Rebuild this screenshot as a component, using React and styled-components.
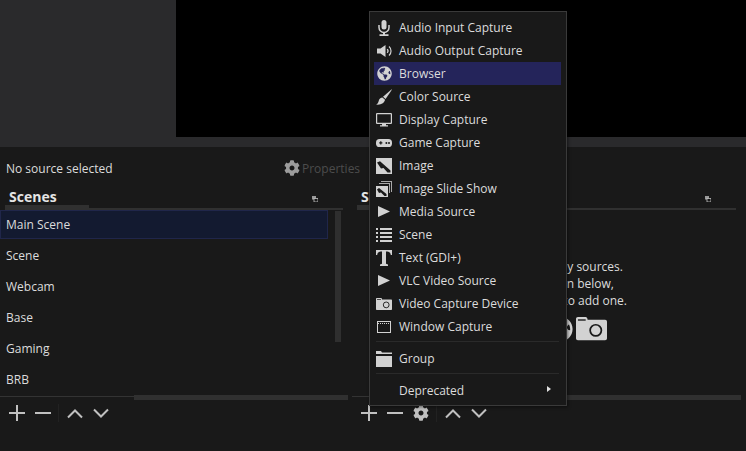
import React from "react";
import styled, { createGlobalStyle } from "styled-components";
import { FaCog } from "react-icons/fa";
import { FaGlobeAmericas } from "react-icons/fa";

const GlobalStyle = createGlobalStyle`
  html, body {
    margin: 0;
    padding: 0;
    background: #191919;
  }
  * {
    box-sizing: border-box;
  }
`;

const Page = styled.div`
  position: relative;
  width: 746px;
  height: 451px;
  overflow: hidden;
  background: #191919;
  color: #dcdcdc;
  font-family: "Open Sans", "Liberation Sans", sans-serif;
  font-size: 12px;
`;

const PreviewArea = styled.div`
  height: 147px;
  padding: 0 0 10px 176px;
  background: #2a2a2c;
`;

const Canvas = styled.div`
  height: 100%;
  background: #000;
`;

const PropertiesBar = styled.div`
  display: flex;
  align-items: center;
  height: 42px;
  padding-left: 6px;
`;

const NoSource = styled.span`
  width: 278px;
`;

const PropertiesButton = styled.div`
  display: flex;
  align-items: center;
  gap: 2px;
  color: #4c4c4c;
  svg {
    color: #9c9c9c;
  }
`;

const Docks = styled.div`
  display: flex;
  gap: 9px;
`;

const Dock = styled.section`
  width: ${(p) => p.$width}px;
  flex: none;
`;

const DockHeader = styled.div`
  display: flex;
  align-items: flex-start;
  justify-content: space-between;
  height: 21px;
  margin-left: 5px;
  padding-right: 25px;
  border-bottom: 2px solid #303030;
`;

const DockTab = styled.div`
  width: 84px;
  height: 19px;
  padding: 1px 0 0 4px;
  border-bottom: 3px solid #303030;
  font-size: 14px;
  font-weight: 700;
  line-height: 14px;
  color: #e4e4e4;
`;

const FloatIcon = styled.svg`
  width: 6px;
  height: 6px;
  margin-top: 7px;
`;

const DockBody = styled.div`
  display: flex;
  height: 185px;
`;

const SceneList = styled.ul`
  width: 328px;
  margin: 0;
  padding: 0;
  list-style: none;
`;

const SceneRow = styled.li`
  display: flex;
  align-items: center;
  height: 29px;
  margin-bottom: 2px;
  padding-left: 5px;
  background: ${(p) => (p.$selected ? "#131a30" : "transparent")};
  border: 1px solid ${(p) => (p.$selected ? "#20264a" : "transparent")};
`;

const VScroll = styled.div`
  width: 6px;
  height: 131px;
  margin: 1px 0 0 7px;
  background: #2f2f2f;
`;

const EmptyHint = styled.div`
  flex: 1;
  padding: 48px 0 0 2px;
  text-align: center;
  line-height: 17px;
`;

const HintIcons = styled.div`
  display: flex;
  justify-content: center;
  align-items: center;
  gap: 3px;
  margin-top: 7px;
  padding-left: 64px;
  color: #d2d2d2;
`;

const HScroll = styled.div`
  display: flex;
  align-items: flex-start;
  height: 5px;
`;

const ScrollTrack = styled.div`
  flex: none;
  width: ${(p) => p.$width}px;
  height: 1px;
  margin-top: 1px;
  background: #333;
`;

const ScrollThumb = styled.div`
  flex: none;
  width: ${(p) => p.$width}px;
  height: 5px;
  background: #303030;
`;

const Toolbar = styled.div`
  display: flex;
  align-items: center;
  height: 26px;
  padding-left: 9px;
  gap: 10px;
`;

const ToolButton = styled.svg`
  width: 16px;
  height: 16px;
  flex: none;
  color: #c0c0c0;
`;

const ToolSeparator = styled.div`
  width: 1px;
  height: 18px;
  margin: 0 -2px 0 -3px;
  background: #222;
`;

const Menu = styled.div`
  position: absolute;
  left: 369px;
  top: 11px;
  width: 198px;
  height: 395px;
  padding: 4px 5px 3px 4px;
  background: #191919;
  border: 1px solid #3a3a3a;
  box-shadow: 1px 1px 3px rgba(0, 0, 0, 0.5);
`;

const MenuItem = styled.div`
  position: relative;
  display: flex;
  align-items: center;
  height: 23px;
  padding-left: 25px;
  background: ${(p) => (p.$active ? "#24245a" : "transparent")};
  white-space: nowrap;
`;

const MenuIcon = styled.span`
  position: absolute;
  left: 2px;
  top: 0;
  display: flex;
  align-items: center;
  justify-content: center;
  width: 16px;
  height: 23px;
  color: #d2d2d2;
`;

const MenuSeparator = styled.div`
  height: 1px;
  margin: 3px 2px 5px 2px;
  background: #2a2a2a;
`;

const SubArrow = styled.span`
  position: absolute;
  right: 10px;
  top: 7px;
  width: 0;
  height: 0;
  border-left: 4px solid #e0e0e0;
  border-top: 3.5px solid transparent;
  border-bottom: 3.5px solid transparent;
`;

const Float = () => (
  <FloatIcon viewBox="0 0 6 6">
    <rect x="0" y="0" width="4" height="3.5" fill="#9a9a9a" />
    <rect x="2" y="2.5" width="4" height="3.5" fill="#191919" stroke="#c0c0c0" strokeWidth="0.8" />
  </FloatIcon>
);

const Plus = () => (
  <ToolButton viewBox="0 0 16 16">
    <path d="M8 0v16M0 8h16" stroke="currentColor" strokeWidth="2" />
  </ToolButton>
);
const Minus = () => (
  <ToolButton viewBox="0 0 16 16">
    <path d="M0 8h16" stroke="currentColor" strokeWidth="2" />
  </ToolButton>
);
const Up = () => (
  <ToolButton viewBox="0 0 16 16">
    <path d="M1 12.5l7-7 7 7" fill="none" stroke="currentColor" strokeWidth="2" />
  </ToolButton>
);
const Down = () => (
  <ToolButton viewBox="0 0 16 16">
    <path d="M1 4.5l7 7 7-7" fill="none" stroke="currentColor" strokeWidth="2" />
  </ToolButton>
);

const Mic = () => (
  <svg width="12" height="16" viewBox="0 0 12 16" fill="currentColor">
    <rect x="3.5" y="0" width="5" height="9.5" rx="2.5" />
    <path d="M1 5v2.5a5 5 0 0 0 10 0V5" fill="none" stroke="currentColor" strokeWidth="1.5" />
    <path d="M5 12h2v2.2h3.5V16h-9v-1.8H5z" />
  </svg>
);
const Speaker = () => (
  <svg width="15" height="14" viewBox="0 0 15 14" fill="currentColor">
    <path d="M0 4.5h3.5L8.5 1v12l-5-3.5H0z" />
    <path d="M10.2 5.2a2.6 2.6 0 0 1 0 3.6" fill="none" stroke="currentColor" strokeWidth="1.2" />
    <path d="M12 2.5a6 6 0 0 1 0 9" fill="none" stroke="currentColor" strokeWidth="1.2" />
  </svg>
);
const Brush = () => (
  <svg width="16" height="16" viewBox="0 0 16 16" fill="currentColor">
    <path d="M16 0l-.8 1.8L9.6 10 7 7.8z" />
    <path d="M6.4 8.6L9 10.8C8.6 13.6 5 16.4 0 15.6c2.4-1 2.4-3 3-4.6.5-1.4 2-2.4 3.4-2.4z" />
  </svg>
);
const Monitor = () => (
  <svg width="16" height="14" viewBox="0 0 16 14">
    <rect x="0.6" y="0.6" width="14.8" height="9.8" rx="0.5" fill="none" stroke="currentColor" strokeWidth="1.2" />
    <path d="M6 11h4v1.2h2v1.2H4v-1.2h2z" fill="currentColor" />
  </svg>
);
const Gamepad = () => (
  <svg width="16" height="8" viewBox="0 0 16 8">
    <rect x="0" y="0" width="16" height="8" rx="3.6" fill="currentColor" />
    <path d="M3.2 3.2h1V2.2h1.2v1h1v1.4h-1v1H4.2v-1h-1z" fill="#191919" />
    <circle cx="10.4" cy="4" r="1" fill="#191919" />
    <circle cx="13" cy="4" r="1" fill="#191919" />
  </svg>
);
const ImageIcon = () => (
  <svg width="16" height="16" viewBox="0 0 16 16">
    <path d="M0 0h16v16H0z" fill="currentColor" />
    <path d="M1 4.5l3-1.2 10.5 9.2v2h-3L7.5 10 5 10.5z" fill="#191919" />
  </svg>
);
const Slides = () => (
  <svg width="16" height="16" viewBox="0 0 16 16">
    <path d="M5 0h11v11h-1V1H5zM3 2h11v2h-1V3H3zM14 2v10h-1V2z" fill="#a8a8a8" />
    <path d="M0 5h12v11H0z" fill="currentColor" />
    <path d="M1 8.5l2-1.5 7.5 6v2H8.5L5 11.5l-2 .5z" fill="#191919" />
  </svg>
);
const Play = () => (
  <svg width="12" height="11" viewBox="0 0 12 11" fill="currentColor">
    <path d="M0 0l12 5.5L0 11z" />
  </svg>
);
const ListIcon = () => (
  <svg width="16" height="14" viewBox="0 0 16 14" fill="currentColor">
    <path d="M0 0h2v2H0zM4 0h12v2H4zM0 4h2v2H0zM4 4h12v2H4zM0 8h2v2H0zM4 8h12v2H4zM0 12h2v2H0zM4 12h12v2H4z" />
  </svg>
);
const SerifT = () => (
  <svg width="16" height="16" viewBox="0 0 16 16" fill="currentColor">
    <path d="M0 0h16v5h-1.2C14.4 2.6 13.6 1.6 10 1.5v12.2l2 .9V16H4v-1.4l2-.9V1.5C2.4 1.6 1.6 2.6 1.2 5H0z" />
  </svg>
);
const Camera = ({ size = 16 }) => (
  <svg width={size} height={size * 0.75} viewBox="0 0 16 12">
    <path d="M0 1C0 .4.4 0 1 0h4c.5 0 .9.5 1 1.4h9c.6 0 1 .4 1 1V11c0 .6-.4 1-1 1H1c-.6 0-1-.4-1-1z" fill="currentColor" />
    <rect x="1" y="1.2" width="4" height="0.7" fill="#191919" />
    <circle cx="10.2" cy="6.9" r="2.9" fill="none" stroke="#191919" strokeWidth="0.9" />
  </svg>
);
const WindowIcon = () => (
  <svg width="14" height="12" viewBox="0 0 14 12">
    <rect x="0.5" y="0.5" width="13" height="11" fill="none" stroke="currentColor" />
    <path d="M1 2.5h12" stroke="currentColor" strokeDasharray="1 1" />
  </svg>
);
const Folder = () => (
  <svg width="16" height="16" viewBox="0 0 16 16" fill="currentColor">
    <path d="M0 0h5l1 1.5h10V3H0zM0 5h16v11H0z" />
  </svg>
);

const menuItems = [
  { label: "Audio Input Capture", icon: <Mic /> },
  { label: "Audio Output Capture", icon: <Speaker /> },
  { label: "Browser", icon: <FaGlobeAmericas size={15} />, active: true },
  { label: "Color Source", icon: <Brush /> },
  { label: "Display Capture", icon: <Monitor /> },
  { label: "Game Capture", icon: <Gamepad /> },
  { label: "Image", icon: <ImageIcon /> },
  { label: "Image Slide Show", icon: <Slides /> },
  { label: "Media Source", icon: <Play /> },
  { label: "Scene", icon: <ListIcon /> },
  { label: "Text (GDI+)", icon: <SerifT /> },
  { label: "VLC Video Source", icon: <Play /> },
  { label: "Video Capture Device", icon: <Camera /> },
  { label: "Window Capture", icon: <WindowIcon /> },
];

const scenes = ["Main Scene", "Scene", "Webcam", "Base", "Gaming", "BRB"];

const App = () => {
  return (
    <Page>
      <GlobalStyle />
      <PreviewArea>
        <Canvas />
      </PreviewArea>
      <PropertiesBar>
        <NoSource>No source selected</NoSource>
        <PropertiesButton>
          <FaCog size={16} />
          Properties
        </PropertiesButton>
      </PropertiesBar>
      <Docks>
        <Dock $width={343}>
          <DockHeader>
            <DockTab>Scenes</DockTab>
            <Float />
          </DockHeader>
          <DockBody>
            <SceneList>
              {scenes.map((name, i) => (
                <SceneRow key={name} $selected={i === 0}>
                  {name}
                </SceneRow>
              ))}
            </SceneList>
            <VScroll />
          </DockBody>
          <HScroll>
            <ScrollTrack $width={134} />
            <ScrollThumb $width={214} />
          </HScroll>
          <Toolbar>
            <Plus />
            <Minus />
            <ToolSeparator />
            <Up />
            <Down />
          </Toolbar>
        </Dock>
        <Dock $width={384}>
          <DockHeader>
            <DockTab>Sources</DockTab>
            <Float />
          </DockHeader>
          <DockBody>
            <EmptyHint>
              You don't have any sources.
              <br />
              Click the + button below,
              <br />
              or right click here to add one.
              <HintIcons>
                <FaGlobeAmericas size={26} />
                <Camera size={31} />
              </HintIcons>
            </EmptyHint>
          </DockBody>
          <HScroll>
            <ScrollTrack $width={20} />
            <ScrollThumb $width={369} />
          </HScroll>
          <Toolbar>
            <Plus />
            <Minus />
            <ToolButton as={FaCog} />
            <ToolSeparator />
            <Up />
            <Down />
          </Toolbar>
        </Dock>
      </Docks>
      <Menu>
        {menuItems.map((item) => (
          <MenuItem key={item.label} $active={item.active}>
            <MenuIcon>{item.icon}</MenuIcon>
            {item.label}
          </MenuItem>
        ))}
        <MenuSeparator />
        <MenuItem>
          <MenuIcon>
            <Folder />
          </MenuIcon>
          Group
        </MenuItem>
        <MenuSeparator />
        <MenuItem>
          Deprecated
          <SubArrow />
        </MenuItem>
      </Menu>
    </Page>
  );
};

export default App;
